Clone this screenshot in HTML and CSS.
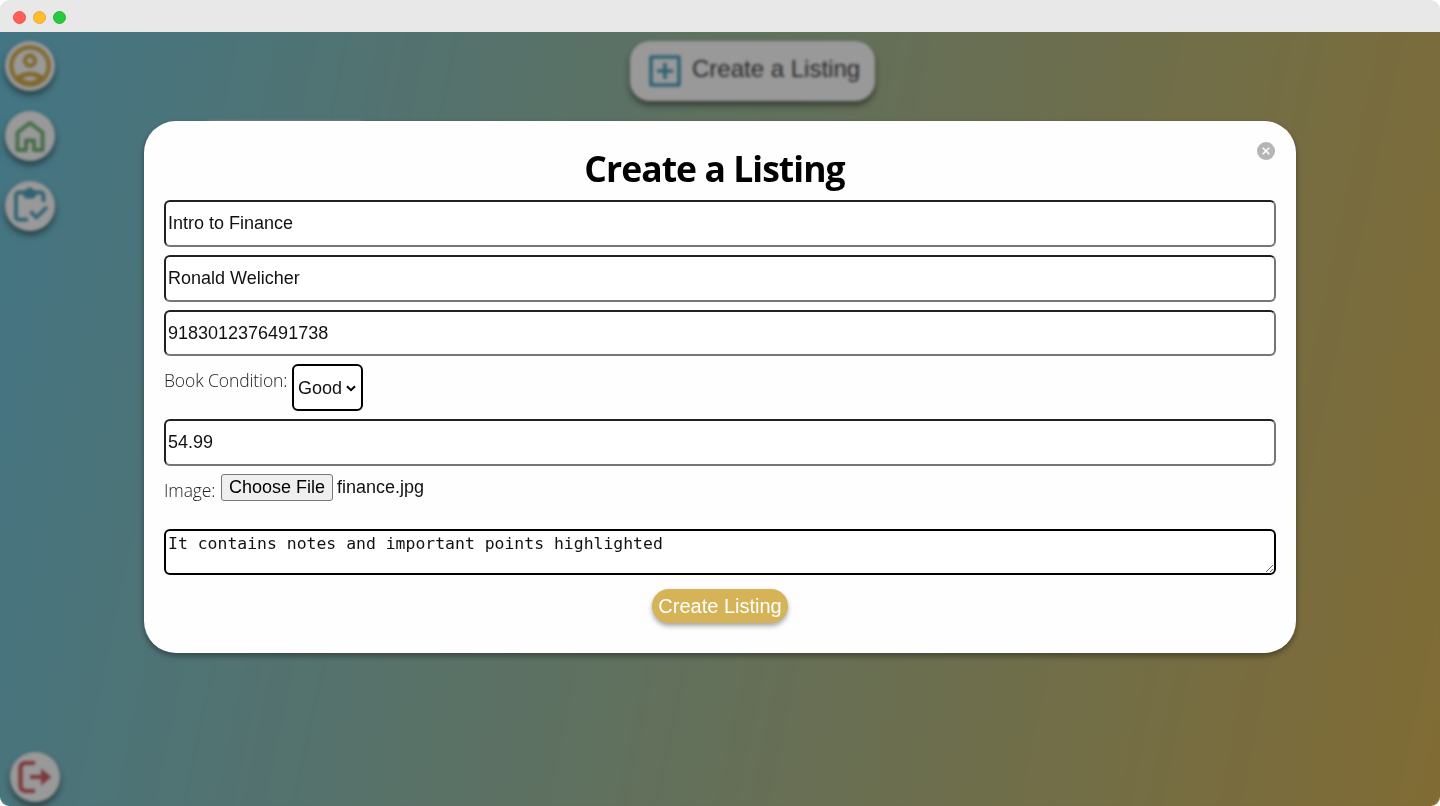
FILE: index.html
```html
<!DOCTYPE html>
<html lang="en">
<head>
<meta charset="utf-8">
<title>Create a Listing</title>
<link rel="stylesheet" href="styles.css">
</head>
<body>
<div class="window">
  <header class="titlebar"><i class="dot red"></i><i class="dot yellow"></i><i class="dot green"></i></header>
  <main class="app">
    <nav class="sidebar">
      <a class="round gold"><svg viewBox="0 0 50 50" width="50" height="50"><g fill="none" stroke="currentColor" stroke-width="4.200"><circle cx="25" cy="25" r="18.700"/><circle cx="25" cy="19.700" r="5"/></g><path fill="currentColor" fill-rule="evenodd" d="M10 36Q25 25.500 40 36L36 41Q25 46 14 41zM17 37.500Q25 32.500 33 37.500 25 42.500 17 37.500z"/></svg></a>
      <a class="round green-icon"><svg viewBox="0 0 50 50" width="50" height="50"><path fill="none" stroke="currentColor" stroke-width="4" stroke-linejoin="round" d="M12.500 39V21.500L25 12l12.500 9.500V39H29V29.500h-8V39z"/></svg></a>
      <a class="round blue"><svg viewBox="0 0 50 50" width="50" height="50"><path fill="none" stroke="currentColor" stroke-width="3.800" stroke-linejoin="round" d="M23 38.700H14a3 3 0 0 1-3-3V14.500a3 3 0 0 1 3-3H35.500a3 3 0 0 1 3 3V21M25.500 30.500l6 6L42 26"/><path fill="currentColor" d="M17.500 9.500H20.500a4.500 4.500 0 0 1 8.500 0H32V13l-3 4.500h-8.500l-3-4.500z"/></svg></a>
      <a class="round red-icon logout"><svg viewBox="0 0 50 50" width="50" height="50"><path fill="none" stroke="currentColor" stroke-width="4.200" d="M25 11h-9q-5.500 0-5.500 5.500v17q0 5.500 5.500 5.500h9M20 25h15"/><path fill="currentColor" d="M31 16.500 41.500 25 31 33.500z"/></svg></a>
    </nav>
    <section class="content">
      <button class="create-pill"><svg class="blue" viewBox="0 0 34 34" width="34" height="34"><path fill="none" stroke="currentColor" stroke-width="3.600" stroke-linejoin="round" d="M3 3h28v28H3zM17 9v16M9 17h16"/></svg><span>Create a Listing</span></button>
      <div class="book-card"></div>
    </section>
    <div class="overlay">
      <form class="modal">
        <div class="modal-head">
          <h1>Create a Listing</h1>
          <svg class="close" viewBox="0 0 18 18" width="18" height="18"><circle cx="9" cy="9" r="9" fill="#b5b5b5"/><path d="M5.700 5.700l6.600 6.600M12.300 5.700l-6.600 6.600" stroke="#fff" stroke-width="1.600"/></svg>
        </div>
        <input class="field" type="text" value="Intro to Finance">
        <input class="field" type="text" value="Ronald Welicher">
        <input class="field" type="text" value="9183012376491738">
        <div class="row"><label class="label">Book Condition:</label><div class="field select"><span>Good</span><svg viewBox="0 0 10 7" width="10" height="7"><path d="M1 1.200l4 4 4-4" fill="none" stroke="#000" stroke-width="2"/></svg></div></div>
        <input class="field" type="text" value="54.99">
        <div class="row file-row"><label class="label">Image:</label><button type="button" class="file-button">Choose File</button><span class="file-name">finance.jpg</span></div>
        <textarea class="field notes">It contains notes and important points highlighted</textarea>
        <button type="button" class="submit">Create Listing</button>
      </form>
    </div>
  </main>
</div>
</body>
</html>
```
FILE: styles.css
```css
* { box-sizing: border-box; }
body { margin: 0; background: #fff; font-family: "Liberation Sans", Arial, sans-serif; }
.window { height: 806px; display: flex; flex-direction: column; border-radius: 9px; overflow: hidden; }
.titlebar { height: 32px; flex: none; background: #e8e8e8; display: flex; align-items: center; gap: 7px; padding: 2px 0 0 13px; }
.dot { width: 13px; height: 13px; border-radius: 50%; }
.red { background: #ff5f57; border: 1px solid #f0524d; }
.yellow { background: #ffbd2e; border: 1px solid #e6a935; }
.green { background: #28c940; border: 1px solid #1fb53a; }
.app { flex: 1; position: relative; display: flex; background: linear-gradient(102deg, #70c3dc, #d6b357); }
.sidebar { width: 65px; padding: 9px 0 4px 5px; display: flex; flex-direction: column; gap: 20px; }
.round { width: 50px; height: 50px; flex: none; border-radius: 50%; background: #fff; display: flex; align-items: center; justify-content: center; box-shadow: 0 4px 6px rgba(0,0,0,.5); }
.logout { margin: auto 0 0 5px; }
.gold { color: #d6ae4c; }
.green-icon { color: #75b57a; }
.blue { color: #52a5c0; }
.red-icon { color: #cf6063; }
.content { flex: 1; display: flex; flex-direction: column; align-items: center; padding-top: 9px; }
.create-pill { width: 245px; height: 60px; border: 0; border-radius: 20px; background: #fff; box-shadow: 0 4px 6px rgba(0,0,0,.5); display: flex; align-items: center; gap: 10px; padding: 0 0 0 18px; font: 24px "Liberation Sans", Arial, sans-serif; color: #444; }
.create-pill span { margin-top: -4px; }
.book-card { align-self: flex-start; width: 170px; height: 200px; margin: 20px 0 0 135px; border-radius: 12px; background: #fff; }
.overlay { position: absolute; inset: 0; background: rgba(0,0,0,.4); backdrop-filter: blur(1.700px); display: flex; justify-content: center; align-items: flex-start; padding-top: 89px; }
.modal { width: 1152px; height: 532px; border-radius: 32px; background: #fefefe; box-shadow: 0 3px 6px rgba(0,0,0,.4); padding: 21px 20px 0; display: flex; flex-direction: column; gap: 8.100px; }
.modal-head { height: 50.200px; display: grid; grid-template-columns: 1fr 11px; }
h1 { margin: 2px 0 0; text-align: center; font: bold 35.500px/48px "Open Sans", "Noto Sans", sans-serif; letter-spacing: -.95px; color: #000; }
.close { justify-self: end; margin-right: 1px; }
.field { display: block; width: 100%; height: 46.650px; flex: none; margin: 0; padding: 1px 2px; border: 2px inset #767676; border-radius: 6px; background: #fff; color: #111; font: 18px "Liberation Sans", Arial, sans-serif; outline: 0; }
.row { height: 46.600px; display: flex; align-items: flex-start; }
.label { font: 300 17.500px/24px "Open Sans", "Noto Sans", sans-serif; letter-spacing: -.1px; color: #222; margin-top: 4px; width: 128px; }
.select { width: 71px; border: 2px solid #000; display: flex; align-items: center; gap: 4px; padding: 1px 4px 0; }
.file-row .label { width: 57px; }
.file-button { width: 112px; height: 27px; border: 1px solid #767676; border-radius: 3px; background: #efefef; padding: 0; font: 18px/23px "Liberation Sans", Arial, sans-serif; color: #000; }
.file-name { margin-left: 4px; font-size: 18px; line-height: 26px; color: #111; }
.notes { border: 2px solid #000; font: 16.450px/26px "DejaVu Sans Mono", monospace; padding: 0 2px; resize: vertical; }
.submit { align-self: center; width: 136px; height: 34px; flex: none; margin-top: 6px; border: 0; border-radius: 17px; background: #d6b357; color: #fff; padding: 0; font: 20px "Liberation Sans", Arial, sans-serif; box-shadow: 0 3px 5px rgba(0,0,0,.35); }
```
